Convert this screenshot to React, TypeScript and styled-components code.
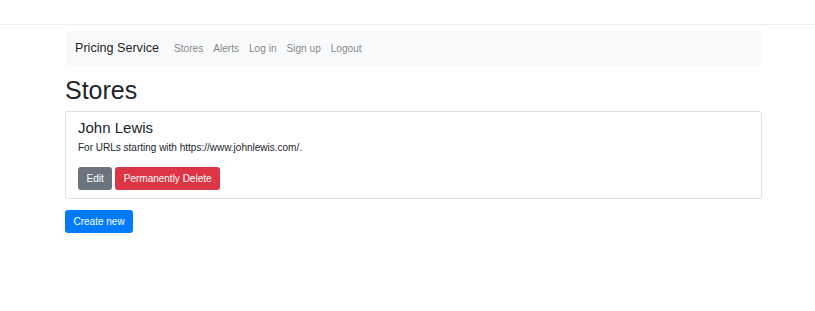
import React from 'react';
import styled, { createGlobalStyle } from 'styled-components'

const GlobalStyle = createGlobalStyle`
  body {
    margin: 0;
    background: #ffffff;
    font-family: "Liberation Sans", Arial, sans-serif;
    color: #212529;
  }
`

type Store = {
    name: string;
    prefix: string;
}

const stores: Store[] = [
    { name: "John Lewis", prefix: "https://www.johnlewis.com/" },
]

const links = ["Stores", "Alerts", "Log in", "Sign up", "Logout"]

function App() {
    return (
        <>
            <GlobalStyle />
            <TopStrip />
            <Container>
                <Navbar>
                    <Brand href="#">Pricing Service</Brand>
                    <NavList>
                        {links.map(l => (
                            <NavLink key={l} href="#">{l}</NavLink>
                        ))}
                    </NavList>
                </Navbar>

                <Heading>Stores</Heading>

                {stores.map(s => (
                    <Card key={s.name}>
                        <CardTitle>{s.name}</CardTitle>
                        <CardText>For URLs starting with {s.prefix}.</CardText>
                        <ButtonRow>
                            <Button variant="secondary">Edit</Button>
                            <Button variant="danger">Permanently Delete</Button>
                        </ButtonRow>
                    </Card>
                ))}

                <Button variant="primary">Create new</Button>
            </Container>
        </>
    );
}

const TopStrip = styled.div`
  height:24px;
  border-bottom:1px solid #efefef;`

const Container = styled.div`
  width:697px;
  margin-left:65px;
  padding-top:6px;`

const Navbar = styled.nav`
  height:34px;
  box-sizing:border-box;
  background:#f8f9fa;
  padding:0 10px;
  display:flex;
  align-items:center;`

const Brand = styled.a`
  font-size:12.6px;
  color:rgba(0,0,0,.9);
  text-decoration:none;
  margin-right:10px;`

const NavList = styled.div`
  display:flex;
  align-items:center;`

const NavLink = styled.a`
  font-size:10.1px;
  color:rgba(0,0,0,.5);
  text-decoration:none;
  padding:0 5px;`

const Heading = styled.h1`
  font-size:25px;
  font-weight:500;
  line-height:30px;
  margin:10px 0 6px;`

const Card = styled.div`
  border:1px solid rgba(0,0,0,.125);
  border-radius:2.5px;
  padding:7px 12px 8px 12px;
  margin-bottom:11px;`

const CardTitle = styled.h4`
  font-size:15px;
  font-weight:500;
  line-height:18px;
  margin:0 0 3px;`

const CardText = styled.p`
  font-size:10px;
  line-height:15px;
  margin:0 0 12px;`

const ButtonRow = styled.div`
  display:flex;
  gap:3px;`

const colors = {
    primary: "#007bff",
    secondary: "#6c757d",
    danger: "#dc3545",
}

const Button = styled.button<{ variant: keyof typeof colors }>`
  font-family:inherit;
  font-size:10px;
  line-height:15px;
  height:23px;
  padding:0 7.5px;
  color:#ffffff;
  background:${p => colors[p.variant]};
  border:1px solid ${p => colors[p.variant]};
  border-radius:2.5px;
  cursor:pointer;`

export default App;
